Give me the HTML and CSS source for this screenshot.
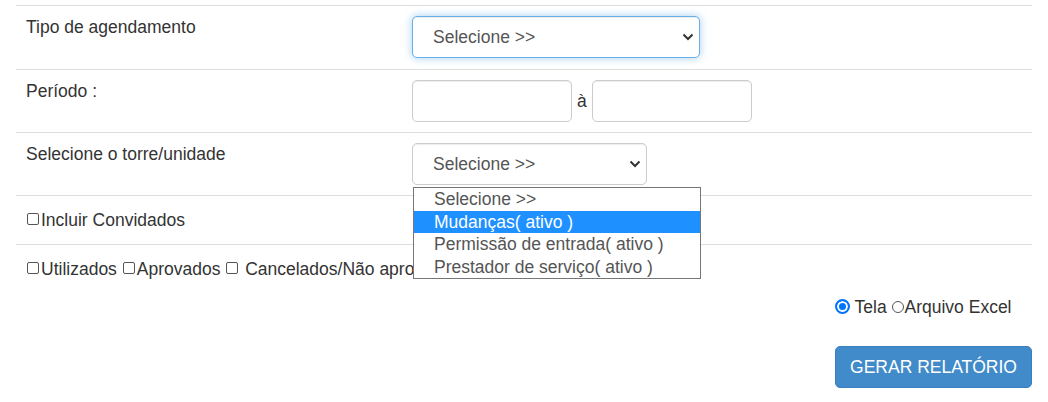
FILE: index.html
```html
<!DOCTYPE html>
<html lang="pt-BR">
<head>
<meta charset="utf-8">
<title>Relatório de agendamentos</title>
<link rel="stylesheet" href="styles.css">
</head>
<body>
<div class="page">
  <div class="table">
    <div class="row">
      <div class="cell label">Tipo de agendamento</div>
      <div class="cell field pb11">
        <div class="select-wrap wide focus">
          <select class="sel"><option>Selecione &gt;&gt;</option></select>
          <svg class="chev" width="12" height="8" viewBox="0 0 12 8"><path d="M1.5 1.5 L6 6 L10.5 1.5" fill="none" stroke="#333" stroke-width="2"/></svg>
        </div>
      </div>
    </div>
    <div class="row">
      <div class="cell label">Período :</div>
      <div class="cell field period">
        <input class="txt" type="text">
        <span class="sep">à</span>
        <input class="txt" type="text">
      </div>
    </div>
    <div class="row">
      <div class="cell label">Selecione o torre/unidade</div>
      <div class="cell field">
        <div class="select-wrap narrow">
          <select class="sel"><option>Selecione &gt;&gt;</option></select>
          <svg class="chev" width="12" height="8" viewBox="0 0 12 8"><path d="M1.5 1.5 L6 6 L10.5 1.5" fill="none" stroke="#333" stroke-width="2"/></svg>
        </div>
      </div>
    </div>
    <div class="row single">
      <div class="cell check-cell"><input class="cb" type="checkbox">Incluir Convidados</div>
    </div>
    <div class="row single">
      <div class="cell check-cell"><input class="cb" type="checkbox">Utilizados <input class="cb" type="checkbox">Aprovados <input class="cb" type="checkbox"> Cancelados/Não aprovados</div>
    </div>
  </div>
  <div class="actions">
    <div class="actions-inner">
      <div class="radios"><input class="rd checked" type="radio" name="out" checked> Tela <input class="rd" type="radio" name="out">Arquivo Excel</div>
      <button class="btn">GERAR RELATÓRIO</button>
    </div>
  </div>
  <ul class="listbox">
    <li class="opt">Selecione &gt;&gt;</li>
    <li class="opt active">Mudanças( ativo )</li>
    <li class="opt">Permissão de entrada( ativo )</li>
    <li class="opt">Prestador de serviço( ativo )</li>
  </ul>
</div>
</body>
</html>
```
FILE: styles.css
```css
* { box-sizing: border-box; }
html, body { margin: 0; padding: 0; background: #fff; }
body {
  font-family: "Liberation Sans", Arial, sans-serif;
  font-size: 17.5px;
  line-height: 24px;
  color: #333;
}
.page {
  position: relative;
  width: 1048px;
  height: 402px;
  padding: 5px 16px 0 16px;
}
.table { width: 1016px; }
.row {
  display: grid;
  grid-template-columns: 386px 1fr;
  border-top: 1px solid #ddd;
}
.row.single { grid-template-columns: 1fr; }
.cell { padding: 10px; }
.label { padding-top: 9px; }
.field { display: block; }
.period { display: flex; align-items: center; gap: 5px; }
.sep { line-height: 24px; }
.pb11 { padding-bottom: 11px; }
.check-cell { padding: 12px 10px; white-space: nowrap; }

.select-wrap {
  position: relative;
  height: 42px;
}
.select-wrap.wide { width: 288px; }
.select-wrap.narrow { width: 235px; }
.sel {
  -webkit-appearance: none;
  appearance: none;
  display: block;
  width: 100%;
  height: 42px;
  margin: 0;
  padding: 0 24px 0 20px;
  font-family: inherit;
  font-size: 17.5px;
  color: #555;
  background: #fff;
  border: 1px solid #ccc;
  border-radius: 5px;
  box-shadow: inset 0 1px 1px rgba(0,0,0,.075);
  outline: none;
}
.focus .sel {
  border-color: #66afe9;
  box-shadow: inset 0 1px 1px rgba(0,0,0,.075), 0 0 8px rgba(102,175,233,.6);
}
.chev {
  position: absolute;
  right: 6px;
  top: 17px;
  width: 12px;
  height: 8px;
  pointer-events: none;
}
.txt {
  flex: none;
  width: 160px;
  height: 42px;
  margin: 0;
  padding: 0 12px;
  font-family: inherit;
  font-size: 17.5px;
  border: 1px solid #ccc;
  border-radius: 5px;
  box-shadow: inset 0 1px 1px rgba(0,0,0,.075);
  background: #fff;
}
.cb {
  -webkit-appearance: none;
  appearance: none;
  display: inline-block;
  width: 12px;
  height: 12px;
  margin: 0 2px 1px 1px;
  border: 1px solid #555;
  border-radius: 2px;
  background: #fff;
  vertical-align: baseline;
}
.actions {
  display: flex;
  justify-content: flex-end;
  margin-top: 2px;
}
.actions-inner {
  display: flex;
  flex-direction: column;
  align-items: flex-start;
}
.radios { white-space: pre; line-height: 24px; }
.rd {
  -webkit-appearance: none;
  appearance: none;
  display: inline-block;
  width: 12px;
  height: 12px;
  margin: 0 1px 0 0;
  border: 1px solid #555;
  border-radius: 50%;
  background: #fff;
  vertical-align: baseline;
}
.rd.checked {
  width: 15px;
  height: 15px;
  margin: 0 0 -1px 0;
  border: 2px solid #0075ff;
  background: #0075ff;
  box-shadow: inset 0 0 0 2px #fff;
}
.btn {
  margin-top: 27px;
  width: 197px;
  height: 42px;
  padding: 0 10px;
  font-family: inherit;
  font-size: 17.5px;
  color: #fff;
  background: #428bca;
  border: 1px solid #3a7fbd;
  border-radius: 5px;
}
.listbox {
  position: absolute;
  left: 413px;
  top: 187px;
  width: 288px;
  height: 92px;
  margin: 0;
  padding: 0;
  list-style: none;
  border: 1px solid #767676;
  background: #fff;
  z-index: 5;
}
.opt {
  height: 22.5px;
  line-height: 22px;
  padding-left: 20px;
  color: #555;
  white-space: nowrap;
}
.opt.active { background: #1e90ff; color: #fff; }
```
